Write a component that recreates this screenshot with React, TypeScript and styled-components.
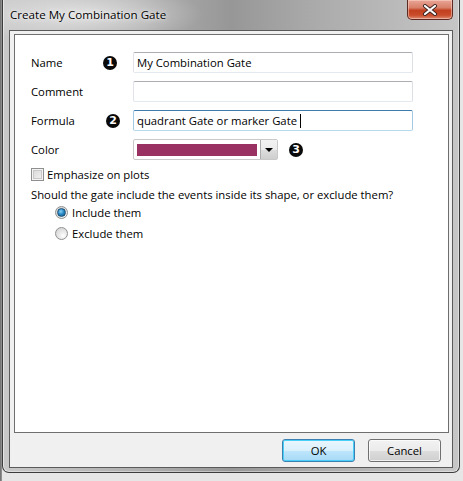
import type { FC } from 'react';
import styled, { createGlobalStyle } from 'styled-components';

const GlobalStyle = createGlobalStyle`
  html, body {
    margin: 0;
    padding: 0;
    background: #dcdcdc;
  }
  * {
    box-sizing: border-box;
  }
`;

const FONT = `"Open Sans", "Noto Sans", "Liberation Sans", sans-serif`;

interface FieldProps {
  label: string;
  badge?: number;
  badgeOffset?: number;
  value?: string;
  focused?: boolean;
}

const Badge: FC<{ n: number; offset?: number }> = ({ n, offset = 0 }) => (
  <BadgeDot $offset={offset}>{n}</BadgeDot>
);

const Field: FC<FieldProps> = ({ label, badge, badgeOffset, value, focused }) => (
  <FieldRow>
    <Label>{label}</Label>
    <BadgeSlot>{badge ? <Badge n={badge} offset={badgeOffset} /> : null}</BadgeSlot>
    <TextBox $focused={focused}>
      {value}
      {focused ? <Caret /> : null}
    </TextBox>
  </FieldRow>
);

const CloseGlyph = () => (
  <svg width="16" height="12" viewBox="0 0 16 12">
    <path
      d="M3 2 L13 10 M13 2 L3 10"
      stroke="#3a2320"
      strokeWidth="4"
      strokeLinecap="round"
      fill="none"
    />
    <path
      d="M3 2 L13 10 M13 2 L3 10"
      stroke="#ffffff"
      strokeWidth="2.2"
      strokeLinecap="round"
      fill="none"
    />
  </svg>
);

const App: FC = () => (
  <>
    <GlobalStyle />
    <Desktop>
      <Window>
        <TitleBar>
          <Caption>Create My Combination Gate</Caption>
          <CloseButton>
            <CloseGlyph />
          </CloseButton>
        </TitleBar>
        <Client>
          <Panel>
            <Form>
              <Field label="Name" badge={1} value="My Combination Gate" />
              <Field label="Comment" />
              <Field
                label="Formula"
                badge={2}
                badgeOffset={3}
                value="quadrant Gate or marker Gate "
                focused
              />
              <FieldRow>
                <Label>Color</Label>
                <BadgeSlot />
                <ColorCombo>
                  <Swatch $color="#993162" />
                  <DropButton>
                    <Arrow />
                  </DropButton>
                </ColorCombo>
                <Badge n={3} offset={11} />
              </FieldRow>
              <CheckRow>
                <CheckBox />
                <span>Emphasize on plots</span>
              </CheckRow>
              <Question>
                Should the gate include the events inside its shape, or exclude
                them?
              </Question>
              <RadioGroup>
                <RadioRow $top={1}>
                  <Radio $checked />
                  <span>Include them</span>
                </RadioRow>
                <RadioRow $top={5}>
                  <Radio />
                  <span>Exclude them</span>
                </RadioRow>
              </RadioGroup>
            </Form>
          </Panel>
          <Footer>
            <DialogButton $primary>OK</DialogButton>
            <DialogButton>Cancel</DialogButton>
          </Footer>
        </Client>
      </Window>
    </Desktop>
  </>
);

export default App;

const Desktop = styled.div`
  width: 463px;
  height: 481px;
  overflow: hidden;
  background: linear-gradient(90deg, #6a6a6a 0, #9a9a9a 2px, #e6e6e6 2px);
  font-family: ${FONT};
  font-size: 11.3px;
  color: #000;
`;

const Window = styled.div`
  margin-left: 2px;
  width: 458px;
  height: 473px;
  display: flex;
  flex-direction: column;
  border: 1px solid #3c3c3c;
  border-top: none;
  border-radius: 0 0 7px 7px;
  background:
    radial-gradient(ellipse 120px 30px at 80px 14px, rgba(255, 255, 255, 0.55), rgba(255, 255, 255, 0) 100%),
    linear-gradient(90deg, #c8c8c8 0%, #b0b0b0 30%, #979797 50%, #acacac 70%, #c6c6c6 100%);
  box-shadow: inset 1px 0 0 rgba(255, 255, 255, 0.5), inset -1px 0 0 rgba(255, 255, 255, 0.4),
    inset 0 -1px 0 rgba(255, 255, 255, 0.4);
`;

const TitleBar = styled.div`
  height: 30px;
  flex: none;
  display: flex;
  justify-content: space-between;
  align-items: flex-start;
`;

const Caption = styled.div`
  margin-left: 7px;
  padding-top: 7px;
  line-height: 16px;
  font-size: 11.6px;
  text-shadow: 0 0 6px rgba(255, 255, 255, 0.95), 0 0 2px rgba(255, 255, 255, 0.8);
`;

const CloseButton = styled.div`
  width: 46px;
  height: 20px;
  margin-right: 6px;
  display: flex;
  align-items: center;
  justify-content: center;
  border: 1px solid #5c2a22;
  border-top: none;
  border-radius: 0 0 5px 5px;
  background: linear-gradient(
    180deg,
    #e9a696 0%,
    #d8806a 40%,
    #c2401f 55%,
    #c94c2c 80%,
    #de8a70 100%
  );
  box-shadow: inset 0 0 0 1px rgba(255, 220, 210, 0.5);
`;

const Client = styled.div`
  flex: 1;
  margin: 0 6px 4px 6px;
  display: flex;
  flex-direction: column;
  padding: 3px 3px 0 4px;
  border: 1px solid #5a5a5a;
  background: #f0f0f0;
`;

const Panel = styled.div`
  height: 399px;
  flex: none;
  background: #fff;
  border: 1px solid #6f6f6f;
`;

const Form = styled.div`
  display: flex;
  flex-direction: column;
  padding: 17px 0 0 16px;
`;

const FieldRow = styled.div`
  height: 21px;
  display: flex;
  align-items: center;
  & + & {
    margin-top: 8px;
  }
`;

const Label = styled.div`
  width: 72px;
  flex: none;
`;

const BadgeSlot = styled.div`
  width: 30px;
  flex: none;
  display: flex;
  align-items: center;
`;

const BadgeDot = styled.div<{ $offset: number }>`
  width: 14px;
  height: 14px;
  margin-left: ${({ $offset }) => $offset}px;
  flex: none;
  border-radius: 50%;
  background: #0a0a0a;
  color: #fff;
  font-family: "DejaVu Sans", sans-serif;
  font-weight: bold;
  font-size: 11px;
  line-height: 14px;
  text-align: center;
`;

const TextBox = styled.div<{ $focused?: boolean }>`
  width: 280px;
  height: 21px;
  padding: 0 3px;
  display: flex;
  align-items: center;
  white-space: pre;
  border: 1px solid;
  border-radius: 2px;
  border-color: ${({ $focused }) =>
    $focused ? '#3d7bad #a4c9e3 #b7d9ed #a4c9e3' : '#abadb3 #dbdfe6 #e3e9ef #e2e3ea'};
`;

const Caret = styled.span`
  display: inline-block;
  width: 1px;
  height: 14px;
  background: #000;
`;

const ColorCombo = styled.div`
  width: 145px;
  height: 21px;
  flex: none;
  display: flex;
  align-items: stretch;
  padding: 4px 0 0 3px;
  border: 1px solid #c9c9c9;
  border-radius: 2px;
  background: #fff;
`;

const Swatch = styled.div<{ $color: string }>`
  width: 121px;
  height: 12px;
  background: ${({ $color }) => $color};
`;

const DropButton = styled.div`
  width: 17px;
  height: 19px;
  margin: -4px 0 0 3px;
  display: flex;
  align-items: center;
  justify-content: center;
  border-left: 1px solid #acacac;
  background: linear-gradient(180deg, #f2f2f2 0%, #ebebeb 50%, #dddddd 51%, #cfcfcf 100%);
`;

const Arrow = styled.div`
  width: 0;
  height: 0;
  border-left: 4px solid transparent;
  border-right: 4px solid transparent;
  border-top: 4px solid #000;
`;

const CheckRow = styled.div`
  height: 13px;
  margin-top: 8px;
  display: flex;
  align-items: center;
  gap: 3px;
`;

const CheckBox = styled.div`
  width: 13px;
  height: 13px;
  flex: none;
  border: 1px solid #8e8f8f;
  background: linear-gradient(135deg, #d6d6d6 0%, #f4f4f4 100%);
  box-shadow: inset 0 0 0 1px #f4f4f4, inset 0 0 0 2px #c8c8c8;
`;

const Question = styled.div`
  margin-top: 6px;
  line-height: 16px;
`;

const RadioGroup = styled.div`
  padding-left: 24px;
  display: flex;
  flex-direction: column;
`;

const RadioRow = styled.div<{ $top: number }>`
  height: 16px;
  margin-top: ${({ $top }) => $top}px;
  display: flex;
  align-items: center;
  gap: 4px;
`;

const Radio = styled.div<{ $checked?: boolean }>`
  width: 13px;
  height: 13px;
  flex: none;
  display: flex;
  align-items: center;
  justify-content: center;
  border: 1px solid #8e8f8f;
  border-radius: 50%;
  background: radial-gradient(circle at 65% 70%, #ffffff 0%, #e6e6e6 45%, #cfcfcf 100%);
  &::after {
    content: '';
    display: ${({ $checked }) => ($checked ? 'block' : 'none')};
    width: 7px;
    height: 7px;
    border-radius: 50%;
    border: 1px solid #1d4f73;
    background: radial-gradient(circle at 40% 35%, #8fd2f5 0%, #2a8cc8 45%, #0d4e7c 100%);
  }
`;

const Footer = styled.div`
  flex: 1;
  display: flex;
  justify-content: flex-end;
  align-items: center;
  gap: 13px;
  padding-right: 8px;
`;

const DialogButton = styled.div<{ $primary?: boolean }>`
  width: 73px;
  height: 23px;
  display: flex;
  align-items: center;
  justify-content: center;
  border: 1px solid ${({ $primary }) => ($primary ? '#3c7fb1' : '#707070')};
  border-radius: 3px;
  background: ${({ $primary }) =>
    $primary
      ? 'linear-gradient(180deg, #eaf6fd 0%, #d9f0fc 50%, #bee6fd 51%, #a7d9f5 100%)'
      : 'linear-gradient(180deg, #f2f2f2 0%, #ebebeb 50%, #dddddd 51%, #cfcfcf 100%)'};
  box-shadow: inset 0 0 0 1px ${({ $primary }) => ($primary ? '#48d0f8' : 'rgba(255,255,255,0.7)')};
`;
